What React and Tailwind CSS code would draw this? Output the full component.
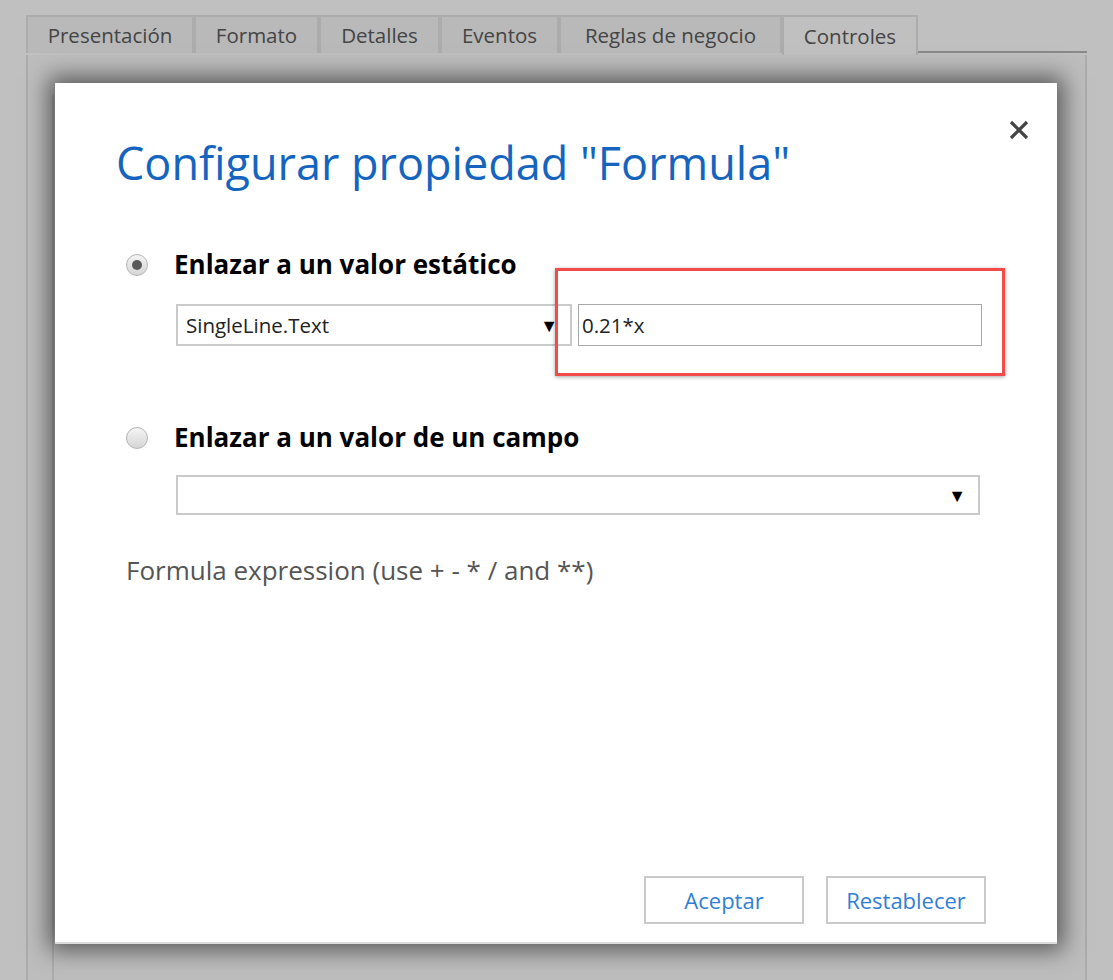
import React from "react";

const font = { fontFamily: '"Open Sans", "Noto Sans", sans-serif' };

function Radio({ checked }) {
  return (
    <span className="flex h-[22px] w-[22px] shrink-0 items-center justify-center rounded-full border border-[#b5b5b5] bg-gradient-to-b from-[#f4f4f4] to-[#d6d6d6]">
      {checked && <span className="h-[10px] w-[10px] rounded-full bg-[#5a5a5a]" />}
    </span>
  );
}

export default function App() {
  const tabs = ["Presentación", "Formato", "Detalles", "Eventos", "Reglas de negocio", "Controles"];
  const widths = ["w-[168px]", "w-[125px]", "w-[121px]", "w-[119px]", "w-[223px]", "w-[136px]"];
  return (
    <div className="relative h-[980px] w-[1113px] overflow-hidden bg-[#c0c0c0]" style={font}>
      {/* tabs */}
      <div className="flex pl-[26px] pt-[15px]">
        {tabs.map((t, i) => {
          const active = i === tabs.length - 1;
          return (
            <div
              key={t}
              className={
                "flex h-[38px] items-center justify-center border-x-2 border-t-2 border-[#acacac] text-[20.5px] text-[#444] " +
                widths[i] +
                (active ? " bg-[#c0c0c0] h-[40px]" : " bg-[#b9b9b9] border-b-0")
              }
            >
              {t}
            </div>
          );
        })}
        <div className="flex-1 pr-[26px]">
          <div className="mt-[36px] h-[2px] w-full bg-[#8a8a8a]" />
        </div>
      </div>
      {/* panel */}
      <div className="mx-[26px] flex h-[930px] border-x-2 border-[#acacac] bg-[#bdbdbd] pl-[24px]">
        <div className="mt-[40px] h-full w-[2px] bg-[#acacac]" />
      </div>

      {/* modal */}
      <div className="absolute left-[55px] top-[83px] flex h-[861px] w-[1002px] flex-col border-b-2 border-[#dcdcdc] bg-white shadow-[0_0_22px_6px_rgba(0,0,0,0.55)]">
        <button className="absolute right-[27px] top-[36px] text-[#444]">
          <svg width="22" height="22" viewBox="0 0 22 22">
            <path d="M3 3 L19 19 M19 3 L3 19" stroke="#444" strokeWidth="3.2" />
          </svg>
        </button>
        <h1 className="ml-[61px] mt-[50px] text-[45px] leading-[60px] text-[#1565c0]">
          Configurar propiedad "Formula"
        </h1>

        <div className="ml-[71px] mt-[52px] flex h-[39px] items-center gap-[26px]">
          <Radio checked />
          <span className="text-[26px] font-bold leading-[39px] text-black">Enlazar a un valor estático</span>
        </div>
        <div className="ml-[121px] mt-[20px] flex gap-[6px]">
          <div className="flex h-[42px] w-[396px] items-center justify-between border-2 border-[#cacaca] pl-[8px] pr-[12px] text-[20.5px] text-[#222]">
            <span>SingleLine.Text</span>
            <span className="text-[18px] text-black">▼</span>
          </div>
          <div className="flex h-[42px] w-[404px] items-center border border-[#a9a9a9] pl-[3px] text-[20.5px] text-[#222]">
            0.21*x
          </div>
        </div>

        <div className="ml-[71px] mt-[72px] flex h-[39px] items-center gap-[26px]">
          <Radio />
          <span className="text-[26px] font-bold leading-[39px] text-black">Enlazar a un valor de un campo</span>
        </div>
        <div className="ml-[121px] mt-[18px] flex h-[40px] w-[804px] items-center justify-end border-2 border-[#cacaca] pr-[12px]">
          <span className="text-[18px] text-black">▼</span>
        </div>

        <div className="ml-[71px] mt-[36px] text-[26px] leading-[39px] text-[#555]">
          Formula expression (use + - * / and **)
        </div>

        <div className="mt-auto mb-[18px] flex justify-end gap-[22px] pr-[71px]">
          <button className="h-[48px] w-[160px] border-2 border-[#cacaca] text-[22px] text-[#2f7fd6]">Aceptar</button>
          <button className="h-[48px] w-[160px] border-2 border-[#cacaca] text-[22px] text-[#2f7fd6]">Restablecer</button>
        </div>

        {/* annotation */}
        <div className="absolute left-[500px] top-[185px] h-[108px] w-[450px] border-[3px] border-[#f44a4a] shadow-[0_1px_4px_rgba(0,0,0,0.35)]" />
      </div>
    </div>
  );
}
